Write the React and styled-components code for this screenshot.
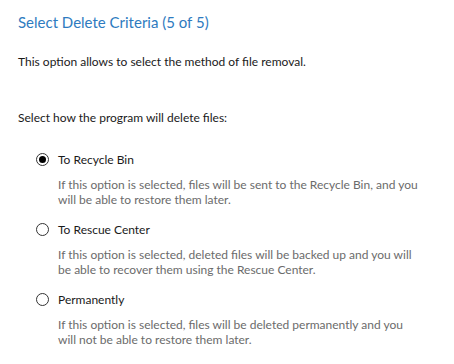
import styled, { createGlobalStyle } from 'styled-components';

const GlobalStyle = createGlobalStyle`
  body {
    margin: 0;
    background: #ffffff;
    font-family: 'Segoe UI', Lato, 'Open Sans', sans-serif;
  }
`;

const Page = styled.div`
  width: 454px;
  height: 364px;
  padding: 12px 18px 0 18px;
  box-sizing: border-box;
  background: #ffffff;
`;

const Title = styled.h1`
  margin: 0;
  font-size: 15px;
  line-height: 21px;
  font-weight: 400;
  color: #2e7bc0;
`;

const Text = styled.p`
  margin: ${(p) => p.$top}px 0 0 0;
  font-size: 12px;
  line-height: 15px;
  color: #1a1a1a;
`;

const Options = styled.div`
  display: flex;
  flex-direction: column;
  gap: 15px;
  margin-top: 27px;
  padding-left: 18px;
`;

const Option = styled.div`
  display: flex;
  flex-direction: column;
`;

const OptionRow = styled.label`
  display: flex;
  align-items: center;
  gap: 9px;
  font-size: 12px;
  line-height: 15px;
  color: #1a1a1a;
`;

const Radio = styled.span`
  width: 13px;
  height: 13px;
  box-sizing: border-box;
  border: 1px solid #333333;
  border-radius: 50%;
  display: flex;
  align-items: center;
  justify-content: center;
  flex-shrink: 0;

  &::after {
    content: '';
    width: 7px;
    height: 7px;
    border-radius: 50%;
    background: #000000;
    display: ${(p) => (p.$checked ? 'block' : 'none')};
  }
`;

const Description = styled.p`
  margin: 10px 0 0 22px;
  font-size: 12px;
  line-height: 15px;
  color: #6b6b6b;
  max-width: 360px;
`;

const options = [
  {
    label: 'To Recycle Bin',
    checked: true,
    text: 'If this option is selected, files will be sent to the Recycle Bin, and you will be able to restore them later.',
  },
  {
    label: 'To Rescue Center',
    checked: false,
    text: 'If this option is selected, deleted files will be backed up and you will be able to recover them using the Rescue Center.',
  },
  {
    label: 'Permanently',
    checked: false,
    text: 'If this option is selected, files will be deleted permanently and you will not be able to restore them later.',
  },
];

export default function App() {
  return (
    <>
      <GlobalStyle />
      <Page>
        <Title>Select Delete Criteria (5 of 5)</Title>
        <Text $top={21}>This option allows to select the method of file removal.</Text>
        <Text $top={41}>Select how the program will delete files:</Text>
        <Options>
          {options.map((o) => (
            <Option key={o.label}>
              <OptionRow>
                <Radio $checked={o.checked} />
                {o.label}
              </OptionRow>
              <Description>{o.text}</Description>
            </Option>
          ))}
        </Options>
      </Page>
    </>
  );
}
